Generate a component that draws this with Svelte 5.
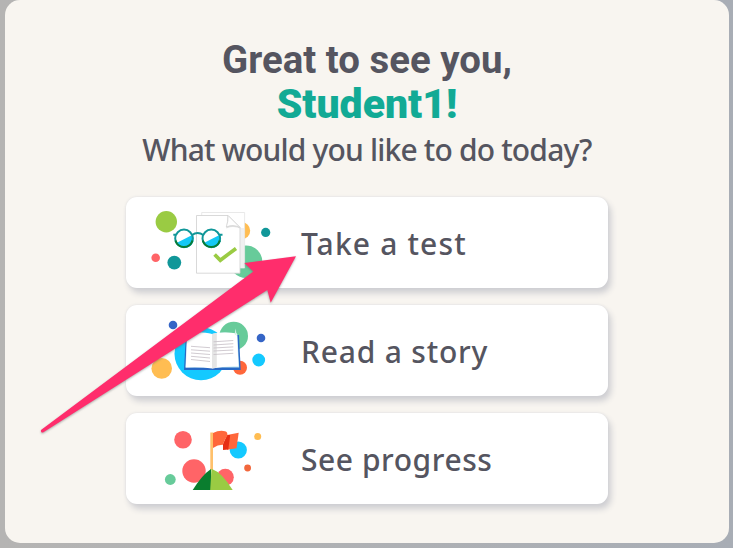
<script lang="ts">
	export let name = 'Student1';

	const actions = [
		{ id: 'test', label: 'Take a test' },
		{ id: 'story', label: 'Read a story' },
		{ id: 'progress', label: 'See progress' }
	];
</script>

<main class="page">
	<section class="panel">
		<h1>
			<span class="hello">Great to see you,</span>
			<span class="name">{name}!</span>
		</h1>
		<p class="question">What would you like to do today?</p>

		<div class="actions">
			{#each actions as action}
				<button class="card">
					<svg class="art" viewBox="0 0 160 91" aria-hidden="true">
						{#if action.id === 'test'}
							<circle cx="40.3" cy="24.7" r="10.7" fill="#9acb43" />
							<circle cx="29.7" cy="60.7" r="4.3" fill="#ff6467" />
							<circle cx="48.3" cy="65.6" r="6.9" fill="#119799" />
							<circle cx="115.7" cy="33.7" r="8.5" fill="#ffbd52" />
							<circle cx="139.7" cy="35.4" r="4.6" fill="#119799" />
							<circle cx="120" cy="64.7" r="16.3" fill="#67cb9a" />
							<path d="M75.7 15.5H118.6V71H75.7Z" fill="#fff" stroke="#e3e3e3" stroke-width=".8" />
							<path d="M114.2 31V71H118V31Z" fill="#f0f0f0" />
							<path d="M70.5 18.5H102L114 30.5V76.2H70.5Z" fill="#fff" stroke="#cfcfcf" stroke-width=".8" />
							<path d="M101.5 18.5L115 32Q108 28.5 100.3 31.5Z" fill="#e2e2e2" />
							<path d="M102 18.5L114 30.5Q107 27 100.3 30Q102.5 24 102 18.5Z" fill="#fff" stroke="#cfcfcf" stroke-width=".7" />
							<path d="M88.6 57.5L94.3 63.2L110 51.4" fill="none" stroke="#9acb43" stroke-width="3.7" />
							<circle cx="58" cy="41.4" r="8.8" fill="#fff" />
							<circle cx="85.3" cy="41.4" r="8.8" fill="#fff" />
							<path d="M50.5 46L66.7 37.7A8.8 8.8 0 0 1 50.5 46ZM77.8 46L94 37.7A8.8 8.8 0 0 1 77.8 46Z" fill="#14c8f5" />
							<g fill="none" stroke="#119799" stroke-width="2">
								<path d="M47.3 37.7H50M66 38Q71.7 34 77.3 38M93.5 37.7H96.5" />
								<circle cx="58" cy="41.4" r="8.8" />
								<circle cx="85.3" cy="41.4" r="8.8" />
								<path d="M49.5 43.5A8.8 8.8 0 0 0 66.5 43.5M76.8 43.5A8.8 8.8 0 0 0 93.8 43.5" stroke="#087c35" />
							</g>
						{:else if action.id === 'story'}
							<circle cx="47" cy="20" r="4.3" fill="#3565c6" />
							<circle cx="75" cy="48.7" r="26.5" fill="#14c9ff" />
							<circle cx="107.7" cy="31" r="14.3" fill="#67cb9a" />
							<circle cx="135" cy="33" r="4.3" fill="#3565c6" />
							<circle cx="132.7" cy="55" r="6.4" fill="#14c9ff" />
							<circle cx="114" cy="62.7" r="7" fill="#ff673b" />
							<circle cx="35.7" cy="63.4" r="10.3" fill="#ffbd52" />
							<path d="M59.8 30H113L114.7 65H58Z" fill="#2868c5" />
							<path d="M61 29Q74 26 86 29Q98 26 111.3 29L113.2 62.5H86L59.4 62.5Z" fill="#b8e3ef" />
							<path d="M61.3 28.5Q75 26.5 86 29V63.5Q73 61.5 59.8 62.5Z" fill="#fff" />
							<path d="M86 29Q98 26.5 111 28.5L112.5 61.5Q98 61 86 63.5Z" fill="#fff" />
							<path d="M86 29L90.8 28V62.7L86 63.5Z" fill="#e5e5e5" />
							<path d="M108.5 29L109.8 23.5L110.7 31Z" fill="#d5f0e5" />
							<g fill="none" stroke="#c5bec5" stroke-width=".8">
								<path d="M65 41.3L84 42.7M65 44.8L84 46.2M65 48L84 49.5M65 51.3L84 53M65 54.5L84 56.5" />
								<path d="M87.5 36.8L107.3 35.5M87.5 40L107.3 38.7M87.5 43L107.3 41.9M87.5 46L107.3 45M87.5 49.5L107.3 48.3" />
							</g>
						{:else}
							<circle cx="57" cy="26.7" r="8.8" fill="#ff6467" />
							<circle cx="68" cy="58" r="11.7" fill="#ff6467" />
							<circle cx="99.3" cy="64.3" r="8.5" fill="#ff6467" />
							<circle cx="44.3" cy="66.5" r="5.4" fill="#67cb9a" />
							<circle cx="112.3" cy="37" r="8.6" fill="#14c9ff" />
							<circle cx="131.7" cy="23.6" r="3.5" fill="#ffbd52" />
							<circle cx="121.6" cy="55" r="3.4" fill="#f2673c" />
							<path d="M101 22L112.7 19.8L110.5 35.3L101 36.8Z" fill="#ff673b" />
							<path d="M97 31L101 22H104.2L102.3 36.5L97 37Z" fill="#e62e14" />
							<path d="M87 20Q93 17 99 18.2Q102 19 101.3 23Q98 27 97 31.7Q92 31.5 87 35Z" fill="#ff673b" />
							<path d="M84.3 19.5H87V57H84.3Z" fill="#ffc16c" />
							<path d="M66.7 77Q76 62 85 56L86 77Z" fill="#0a7d2e" />
							<path d="M85.5 55.7Q96 59.5 106.7 77H84.2Z" fill="#9acb43" />
						{/if}
					</svg>
					<span class="label {action.id}">{action.label}</span>
				</button>
			{/each}
		</div>
	</section>

	<!-- pointer towards the first action -->
	<svg class="arrow" viewBox="0 0 733 548" aria-hidden="true">
		<path d="M296 256.3L244.3 263L253.3 271.5L41 430Q40.5 433 43 432.5L267.3 290L270.7 302.7Z" fill="#ff2d6c" />
	</svg>
</main>

<style>
	:global(body) {
		overflow: hidden;
	}
	.page {
		position: relative;
		height: 548px;
		padding: 0 4px 5px 5px;
		box-sizing: border-box;
		background: linear-gradient(90deg, #b5b4b3, #a8adb5);
	}
	.panel {
		height: 543px;
		padding-top: 38px;
		box-sizing: border-box;
		border-radius: 15px;
		background: #f8f5f0;
		color: #555560;
		text-align: center;
	}
	h1 {
		margin: 0;
		font: 700 38.4px/44px Roboto, sans-serif;
	}
	h1 span {
		display: block;
		white-space: nowrap;
	}
	.name {
		color: #12aa95;
		font-size: 41px;
		font-weight: 900;
	}
	.question {
		margin: 2px 0 0;
		font: 500 30px/44px "Noto Sans", sans-serif;
		letter-spacing: -0.83px;
		white-space: nowrap;
	}
	.actions {
		display: grid;
		gap: 16.5px;
		width: 482px;
		margin: 25px 0 0 121px;
	}
	.card {
		display: flex;
		align-items: center;
		height: 91.4px;
		padding: 0;
		border: 0;
		border-radius: 11px;
		background: #fff;
		box-shadow: 3px 5px 6px #ceced2, 0 0 3px #dddddf;
		color: #555560;
		text-align: left;
	}
	.art {
		flex: none;
		width: 160px;
		height: 91px;
	}
	.label {
		margin: 3px 0 0 15px;
		font: 500 30px/40px "Noto Sans", sans-serif;
		white-space: nowrap;
	}
	.test {
		letter-spacing: 1.15px;
	}
	.story {
		letter-spacing: 0.8px;
	}
	.progress {
		letter-spacing: 0.55px;
	}
	.arrow {
		position: absolute;
		inset: 0;
		width: 733px;
		height: 548px;
		pointer-events: none;
		filter: drop-shadow(0 1px 1px #6668);
	}
</style>
